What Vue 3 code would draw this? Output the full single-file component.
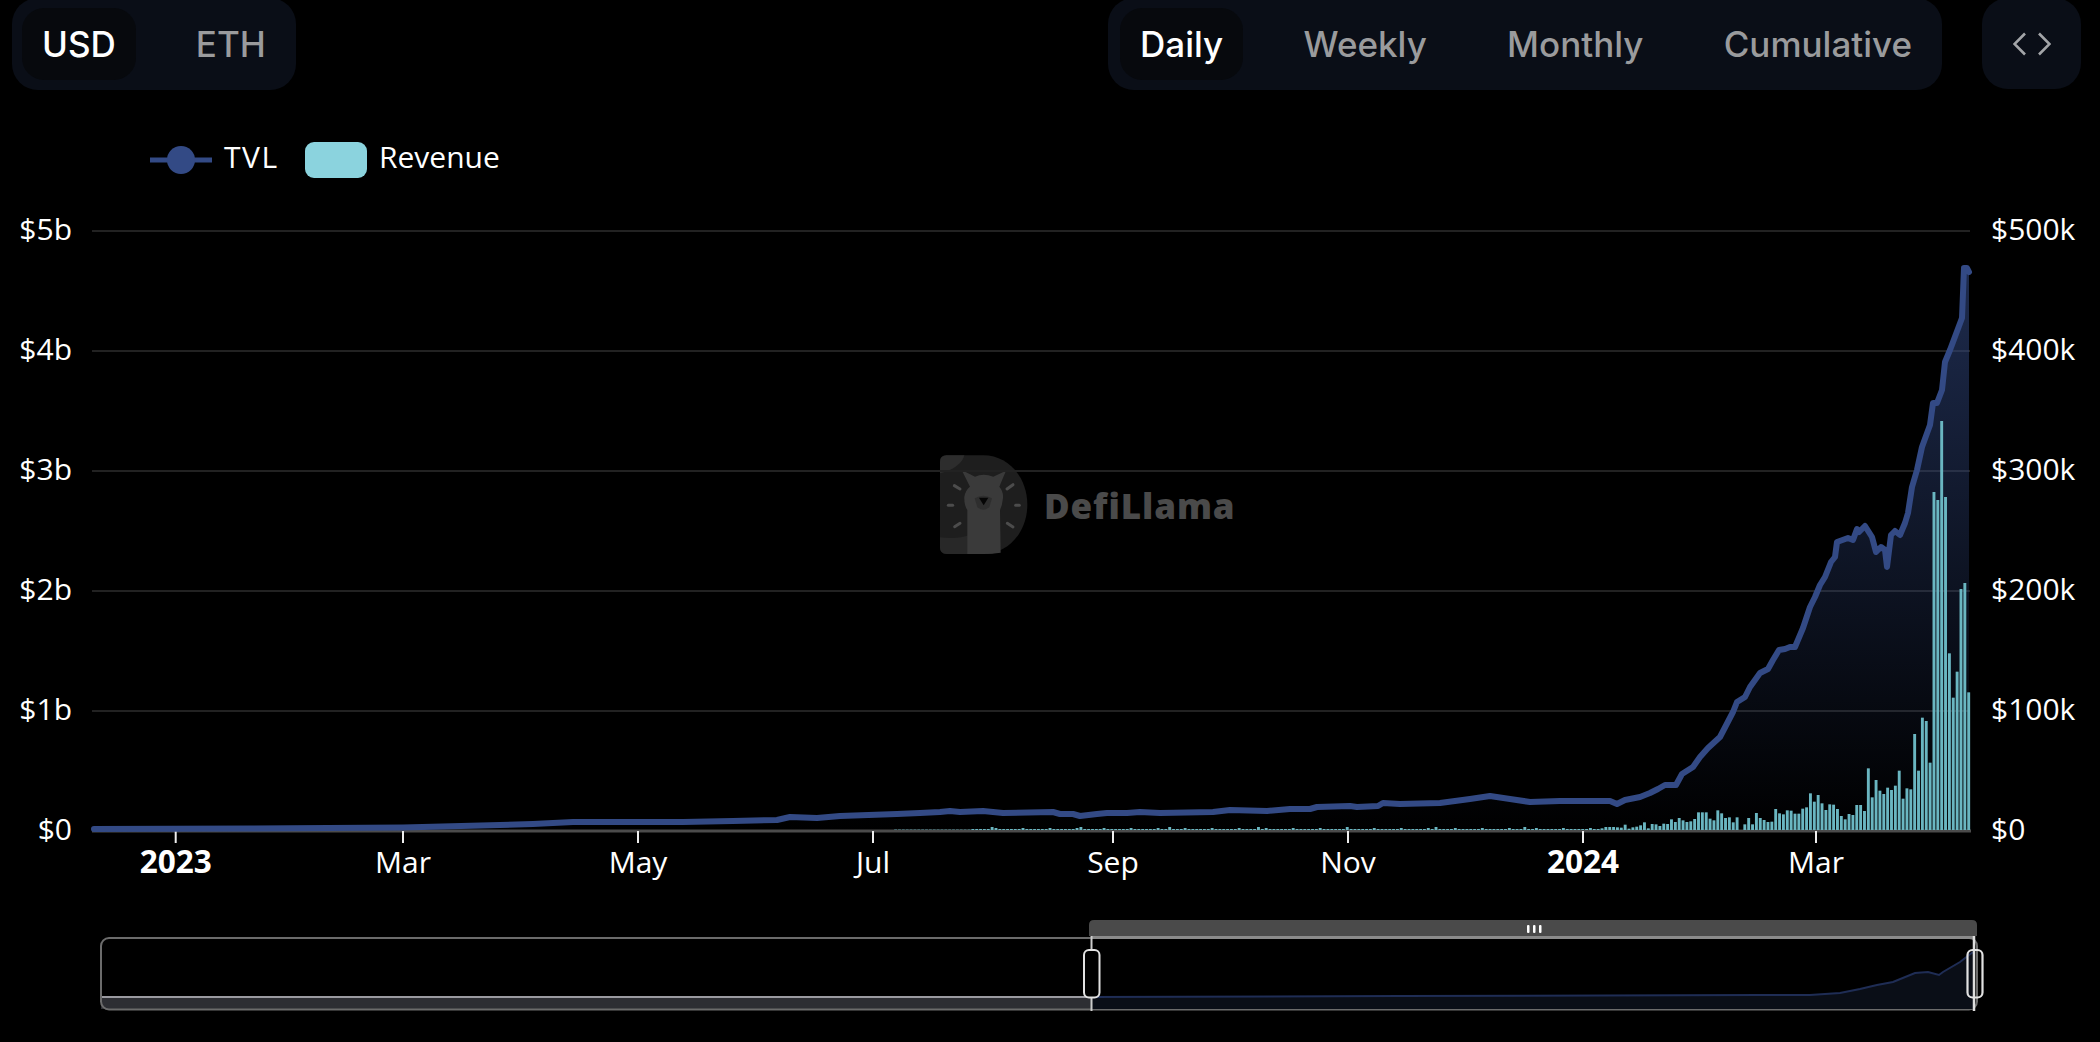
<script setup>
const currencies = [
  { label: 'USD', active: true },
  { label: 'ETH', active: false },
]
const periods = [
  { label: 'Daily', active: true },
  { label: 'Weekly', active: false },
  { label: 'Monthly', active: false },
  { label: 'Cumulative', active: false },
]

const gridRows = [
  { y: 231, left: '$5b', right: '$500k' },
  { y: 351, left: '$4b', right: '$400k' },
  { y: 471, left: '$3b', right: '$300k' },
  { y: 591, left: '$2b', right: '$200k' },
  { y: 711, left: '$1b', right: '$100k' },
  { y: 831, left: '$0', right: '$0' },
]
const xTicks = [
  { x: 175.7, label: '2023', strong: true },
  { x: 403, label: 'Mar' },
  { x: 638, label: 'May' },
  { x: 873, label: 'Jul' },
  { x: 1113, label: 'Sep' },
  { x: 1348, label: 'Nov' },
  { x: 1583, label: '2024', strong: true },
  { x: 1816, label: 'Mar' },
]

const tvl = [
  [94, 829], [250, 828.5], [403, 827.5], [500, 825], [533, 824], [573, 822], [617, 822], [683, 822], [733, 821],
  [777, 820], [790, 817], [817, 818], [840, 816], [897, 814], [920, 813], [940, 812], [950, 811], [960, 812],
  [983, 811], [1003, 813], [1053, 812], [1060, 814], [1073, 814], [1080, 816], [1097, 814], [1107, 813], [1127, 813],
  [1140, 812], [1160, 813], [1213, 812], [1230, 810], [1267, 811], [1290, 809], [1310, 809], [1317, 807], [1350, 806],
  [1357, 807], [1378, 806], [1383, 803], [1400, 804], [1440, 803], [1470, 799], [1490, 796], [1510, 799], [1530, 802],
  [1560, 801], [1580, 801], [1600, 801], [1610, 801], [1617, 804], [1625, 800], [1640, 797], [1650, 793], [1658, 789],
  [1665, 785], [1676, 785], [1682, 774], [1693, 767], [1700, 757], [1708, 748], [1720, 737], [1733, 712], [1737, 702],
  [1745, 697], [1750, 687], [1760, 673], [1768, 669], [1773, 660], [1779, 650], [1785, 649], [1790, 647], [1795, 647],
  [1803, 628], [1810, 607], [1815, 597], [1820, 585], [1825, 577], [1831, 562], [1835, 557], [1837, 542], [1848, 538],
  [1853, 540], [1857, 529], [1859, 532], [1865, 526], [1872, 537], [1876, 552], [1881, 547], [1885, 550], [1887, 567],
  [1891, 535], [1895, 531], [1900, 535], [1905, 523], [1908, 513], [1912, 487], [1917, 470], [1922, 447], [1930, 425],
  [1933, 403], [1937, 403], [1942, 390], [1945, 362], [1950, 350], [1962, 318], [1964, 268], [1967, 268], [1969, 272],
]
const toPath = (pts) => pts.map((p, i) => `${i ? 'L' : 'M'}${p[0]} ${p[1]}`).join(' ')
const tvlLine = toPath(tvl)
const tvlArea = `${tvlLine} L1969 831 L94 831 Z`

// Bar tops read right-to-left, in the y units of a 3x crop starting at y = 640.
const recentTops = [
  157, -171, -153, 95, 173, 40, -429, -657, -420, -444, 368, 243, 233, 392, 282, 448, 445, 476, 392, 437, 450, 443, 462,
  452, 420, 472, 385, 513, 495, 495, 525, 522, 538, 528, 507, 494, 493, 510, 490, 465, 485, 460, 502, 506, 521, 521, 512,
  511, 523, 520, 507, 545, 546, 540, 534, 519, 553, 534, 553, 570, 532, 547, 532, 534, 520, 511, 541, 536, 517, 517, 517,
  537, 544, 546, 541, 534, 546, 538, 552, 551, 558, 553, 552, 565, 547, 556, 560, 562, 566, 554, 563, 562, 561, 561, 561,
  565,
]
const bars = recentTops.map((t, k) => {
  const top = 640 + t / 3
  return { x: 1968.7 - 3.86 * k - 1.45, y: top, h: 830 - top, faint: false }
})
for (let k = 96; k < 279; k++) {
  const x = 1968.7 - 3.86 * k - 1.45
  const early = x < 970
  const h = early ? 0.8 : k % 23 === 0 ? 3 : k % 7 === 0 ? 2 : 1
  bars.push({ x, y: 830 - h, h, faint: early })
}

const miniPts = [
  [1091, 997], [1400, 996], [1760, 995], [1810, 995], [1840, 993], [1860, 989], [1877, 985], [1893, 982], [1915, 973],
  [1928, 972], [1939, 975], [1943, 972], [1960, 962], [1973, 952],
]
const miniLine = toPath(miniPts)
const miniArea = `${miniLine} L1973 1009 L1091 1009 Z`
</script>

<template>
  <div class="page">
    <header class="toolbar">
      <div class="group group-currency">
        <button v-for="c in currencies" :key="c.label" class="tab" :class="{ active: c.active }">{{ c.label }}</button>
      </div>
      <div class="toolbar-right">
        <div class="group group-period">
          <button v-for="p in periods" :key="p.label" class="tab" :class="{ active: p.active }">{{ p.label }}</button>
        </div>
        <button class="embed" aria-label="Embed">
          <svg width="38" height="24" viewBox="0 0 38 24" fill="none">
            <path d="M12 1.5 L1.5 12 L12 22.5" stroke="#a3a5a8" stroke-width="2.6" />
            <path d="M26 1.5 L36.5 12 L26 22.5" stroke="#a3a5a8" stroke-width="2.6" />
          </svg>
        </button>
      </div>
    </header>

    <svg class="chart" width="2100" height="952" viewBox="0 90 2100 952">
      <defs>
        <linearGradient id="areaFill" gradientUnits="userSpaceOnUse" x1="0" y1="268" x2="0" y2="831">
          <stop offset="0" stop-color="#334a85" stop-opacity="0.58" />
          <stop offset="1" stop-color="#334a85" stop-opacity="0" />
        </linearGradient>
      </defs>

      <!-- Legend -->
      <line x1="150" y1="160" x2="212" y2="160" stroke="#334a85" stroke-width="5" />
      <circle cx="181" cy="160" r="14" fill="#334a85" />
      <text class="label tvl-name" x="224" y="168">TVL</text>
      <rect x="305" y="142" width="62" height="36" rx="9" fill="#8bd3de" />
      <text class="label" x="379" y="168">Revenue</text>

      <!-- Watermark -->
      <g transform="translate(900 430) scale(0.3333)">
        <path d="M140 76 H250 C325 76 382 142 382 224 C382 306 325 372 250 372 H140 Q120 372 120 352 V96 Q120 76 140 76 Z" fill="#1e1e1e" />
        <path d="M140 76 H193 C190 96 160 122 120 130 V96 Q120 76 140 76 Z" fill="#2d2d2d" />
        <path d="M120 322 C160 328 200 322 230 305 L300 305 L300 365 C285 370 268 372 250 372 H140 Q120 372 120 352 Z" fill="#282828" />
        <path d="M202 372 L202 240 Q192 225 193 200 Q197 180 210 170 L185 120 L225 140 Q250 128 280 140 L318 122 L298 170 Q311 185 309 205 Q307 225 300 240 L302 368 Q275 372 250 372 Z" fill="#3a3a3a" />
        <path d="M224 205 Q250 190 276 205 L268 232 Q250 246 232 232 Z" fill="#2e2e2e" />
        <path d="M237 203 H265 L251 226 Z" fill="#050505" />
        <g stroke="#4c4c4c" stroke-width="9" stroke-linecap="round" fill="none">
          <path d="M163 167 L180 177" />
          <path d="M145 226 H158" />
          <path d="M164 290 L180 280" />
          <path d="M321 177 L339 164" />
          <path d="M347 226 H358" />
          <path d="M322 280 L339 291" />
        </g>
      </g>
      <text class="watermark" x="1044" y="519">DefiLlama</text>

      <!-- Grid -->
      <line v-for="r in gridRows.slice(0, 5)" :key="r.y" x1="92" :y1="r.y" x2="1970" :y2="r.y" stroke="#222" stroke-width="2" />
      <line x1="92" y1="831" x2="1971" y2="831" stroke="#4b4b4b" stroke-width="3" />
      <template v-for="r in gridRows" :key="r.left">
        <text class="label" x="72" :y="r.y + 9" text-anchor="end">{{ r.left }}</text>
        <text class="label" x="1991" :y="r.y + 9">{{ r.right }}</text>
      </template>

      <!-- X axis -->
      <template v-for="t in xTicks" :key="t.x">
        <line :x1="t.x" y1="831" :x2="t.x" y2="843" stroke="#eee" stroke-width="2" />
        <text class="label" :class="{ strong: t.strong }" :x="t.x" y="873" text-anchor="middle">{{ t.label }}</text>
      </template>

      <!-- Series -->
      <path :d="tvlArea" fill="url(#areaFill)" />
      <rect v-for="(b, i) in bars" :key="i" :x="b.x" :y="b.y" width="2.9" :height="b.h" fill="#6ab6c1" :opacity="b.faint ? 0.5 : 1" />
      <path :d="tvlLine" fill="none" stroke="#334a85" stroke-width="6" stroke-linejoin="round" stroke-linecap="round" />

      <!-- Range slider -->
      <rect x="101" y="997" width="990" height="12" fill="#2d2e33" />
      <line x1="100" y1="997" x2="1091" y2="997" stroke="#9a9aa0" stroke-width="2" />
      <rect x="101" y="938" width="1876" height="71.5" rx="8" fill="none" stroke="#6b6b6b" stroke-width="2" />
      <path :d="miniArea" fill="#0a0e17" />
      <path :d="miniLine" fill="none" stroke="#1f2d55" stroke-width="2" />
      <line x1="1091" y1="937.5" x2="1975" y2="937.5" stroke="#8a8a8a" stroke-width="3" />
      <line x1="1091.5" y1="936" x2="1091.5" y2="1011" stroke="#ccc" stroke-width="2" />
      <line x1="1974" y1="936" x2="1974" y2="1011" stroke="#ddd" stroke-width="2.5" />
      <path d="M1094 920 H1972 Q1977 920 1977 925 V936 H1089 V925 Q1089 920 1094 920 Z" fill="#4a4a4a" />
      <rect x="1527" y="925" width="2.5" height="8" rx="1" fill="#fff" />
      <rect x="1533" y="925" width="2.5" height="8" rx="1" fill="#fff" />
      <rect x="1539" y="925" width="2.5" height="8" rx="1" fill="#fff" />
      <rect x="1084" y="950" width="15.5" height="47.5" rx="5" fill="#000" stroke="#e2e2e2" stroke-width="2" />
      <rect x="1967.5" y="950" width="15" height="47.5" rx="5" fill="none" stroke="#e2e2e2" stroke-width="2.2" />
    </svg>
  </div>
</template>

<style>
html, body {
  margin: 0;
  background: #000;
  overflow: hidden;
}
</style>

<style scoped>
.page {
  width: 2100px;
  height: 1042px;
  background: #000;
  overflow: hidden;
}
.toolbar {
  display: flex;
  justify-content: space-between;
  align-items: flex-start;
  height: 92px;
  margin-top: -2px;
  padding: 0 19px 0 12px;
}
.toolbar-right {
  display: flex;
  gap: 40px;
}
.group {
  display: flex;
  gap: 40px;
  padding: 10px;
  background: #0a0e17;
  border-radius: 26px;
}
.group-period {
  padding-left: 12px;
  gap: 40.3px;
}
.tab {
  height: 72px;
  padding: 0 20px;
  border: 0;
  border-radius: 22px;
  background: transparent;
  color: #9a9b9d;
  font: 500 35px "Inter", sans-serif;
}
.tab.active {
  background: #07090d;
  color: #fff;
}
.embed {
  display: flex;
  align-items: center;
  justify-content: center;
  width: 99px;
  height: 91px;
  padding: 0;
  border: 0;
  border-radius: 26px;
  background: #0a0e17;
}
.chart {
  display: block;
}
.label {
  font: 400 30px "Open Sans", sans-serif;
  fill: #fff;
}
.label.strong {
  font-size: 31.5px;
  font-weight: 700;
}
.tvl-name {
  letter-spacing: 1.6px;
}
.watermark {
  font: 800 35px "Open Sans", sans-serif;
  letter-spacing: 0.9px;
  fill: #4a4a4a;
}
</style>
